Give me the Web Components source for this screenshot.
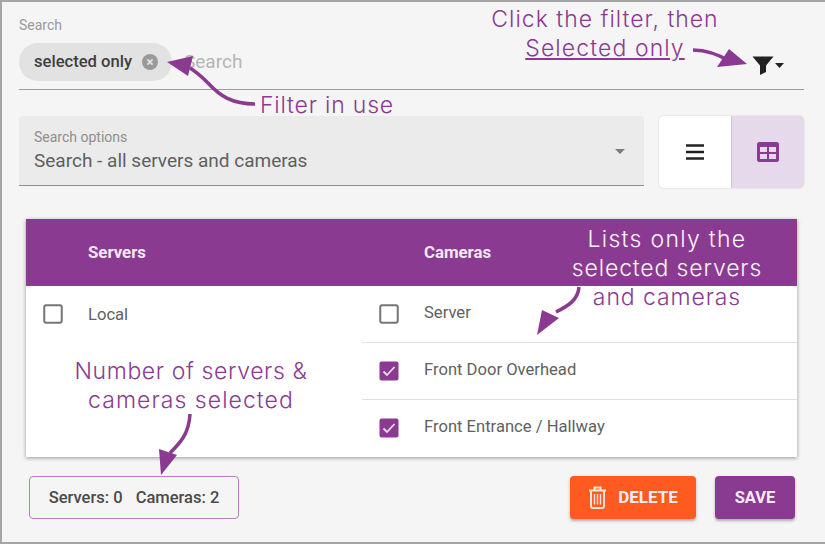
<!DOCTYPE html>
<html><head><meta charset="utf-8">
<style>
html,body{margin:0;padding:0;width:825px;height:544px;overflow:hidden;background:#f5f5f5}
body{font-family:Roboto,"Liberation Sans",sans-serif}
</style></head>
<body>
<app-frame>
  <search-bar slot="search"></search-bar>
  <options-row slot="options"></options-row>
  <data-table slot="table"></data-table>
  <footer-bar slot="footer"></footer-bar>
  <call-out slot="notes" style="left:470px;top:3px;width:266px"><span style="letter-spacing:1px">Click the filter, then</span><br><u style="letter-spacing:1.100px">Selected only</u></call-out>
  <call-out slot="notes" style="left:250px;top:89px;width:150px"><span style="letter-spacing:.8px">Filter in use</span></call-out>
  <call-out slot="notes" style="left:532px;top:223px;width:266px" data-tone="mix"><b style="font-weight:300;letter-spacing:1.300px">Lists only the</b><br><b style="font-weight:300;letter-spacing:.85px">selected servers</b><br><span style="letter-spacing:.9px">and cameras</span></call-out>
  <call-out slot="notes" style="left:49px;top:355px;width:280px"><span style="letter-spacing:.6px">Number of servers &amp;</span><br><span style="letter-spacing:1.050px">cameras selected</span></call-out>
  <note-arrows slot="notes"></note-arrows>
</app-frame>
<script>
const tpl = (el, html) => { el.attachShadow({mode:'open'}).innerHTML = html; };
class AppFrame extends HTMLElement{constructor(){super();tpl(this,`<style>
:host{display:block;position:relative;box-sizing:border-box;width:825px;height:544px;background:#f5f5f5;border:solid #a6a6a6;border-width:2px 0 2px 2px;padding:0 21px 0 17px;overflow:hidden}
.t{padding:0 7px;margin-top:31px}
.f{margin-top:19px}
</style><slot name="search"></slot><slot name="options"></slot><div class="t"><slot name="table"></slot></div><div class="f"><slot name="footer"></slot></div><slot name="notes"></slot>`);}}
class SearchBar extends HTMLElement{constructor(){super();tpl(this,`<style>
:host{display:block;height:88px;box-sizing:border-box;border-bottom:1.5px solid #9b9b9b;padding-top:16px;position:relative}
.l{font-size:14px;line-height:14px;color:#9a9a9a}
.row{display:flex;align-items:center;margin-top:11px}
.chip{display:flex;align-items:center;height:38px;width:153px;box-sizing:border-box;border-radius:19px;background:#e2e2e2;padding-left:15px;font-weight:500;color:#3f3f3f;white-space:nowrap;font-size:16.6px;line-height:36px}
.chip svg{margin-left:10px;flex:none}
.ph{margin-left:12px;font-size:19px;line-height:36px;color:#b5b5b5}
.fil{position:absolute;right:20px;top:54px;display:flex;align-items:center}
</style><div class="l">Search</div><div class="row"><div class="chip">selected only<svg width="16" height="16" viewBox="0 0 16 16"><circle cx="8" cy="8" r="8" fill="#9a9a9a"/><path d="M5.4 5.4l5.2 5.2M10.6 5.4l-5.2 5.2" stroke="#e2e2e2" stroke-width="1.9"/></svg></div><div class="ph">Search</div></div>
<div class="fil"><svg width="22" height="19" viewBox="0 0 22 19"><path d="M.5.5h21l-7.500 9v6.500l-6 3V9.500z" fill="#222"/></svg><svg width="9" height="5" viewBox="0 0 9 5" style="margin:0 0 0 1px"><path d="M0 0h9L4.500 5z" fill="#222"/></svg></div>`);}}
class OptionsRow extends HTMLElement{constructor(){super();tpl(this,`<style>
:host{display:flex;margin-top:25.5px;height:72px;gap:15px}
.sel{flex:1;height:70px;box-sizing:border-box;background:#ebebeb;border-bottom:1.5px solid #8e8e8e;border-radius:4px 4px 0 0;padding:14px 15px 0;position:relative}
.l{font-size:14px;line-height:14px;color:#8f8f8f}
.v{line-height:20px;margin-top:7px;color:#5f5f5f;font-size:19px}
.c{position:absolute;right:19px;top:33px;width:0;height:0;border:5.5px solid transparent;border-top:5.5px solid #7c7c7c;border-bottom:0}
.tg{display:flex;width:145px;border-radius:5px;overflow:hidden;box-shadow:0 0 1.5px rgba(0,0,0,.25)}
.tg div{flex:1;display:flex;align-items:center;justify-content:center;background:#fff}
.tg div+div{background:#e6d9ec;border-left:1px solid #d0c4d6}
</style><div class="sel"><div class="l">Search options</div><div class="v">Search - all servers and cameras</div><div class="c"></div></div>
<div class="tg"><div><svg width="20" height="18" viewBox="0 0 20 18"><path d="M1 2.500h18M1 9h18M1 15.500h18" stroke="#222" stroke-width="2.400" fill="none"/></svg></div>
<div><svg width="22" height="20" viewBox="0 0 22 20"><rect x="0" y="0" width="22" height="20" rx="2.500" fill="#8b3a92"/><rect x="3" y="5" width="7" height="5" fill="#e6d9ec"/><rect x="12" y="5" width="7" height="5" fill="#e6d9ec"/><rect x="3" y="12" width="7" height="5" fill="#e6d9ec"/><rect x="12" y="12" width="7" height="5" fill="#e6d9ec"/></svg></div></div>`);}}
class CheckBox extends HTMLElement{constructor(){super();const on=this.hasAttribute('checked');tpl(this,`<style>:host{display:block;width:20px;height:20px;flex:none}</style>`+(on?`<svg width="20" height="20" viewBox="0 0 20 20"><rect x=".5" y=".5" width="19" height="19" rx="2" fill="#8b3a92"/><path d="M4.500 10.500l3.500 3.500 7.500-8" stroke="#e9dcec" stroke-width="1.800" fill="none"/></svg>`:`<svg width="20" height="20" viewBox="0 0 20 20"><rect x="1.250" y="1.250" width="17.500" height="17.500" rx="2" fill="none" stroke="#757575" stroke-width="2"/></svg>`));}}
class DataTable extends HTMLElement{constructor(){super();tpl(this,`<style>
:host{display:block;background:#fff;box-shadow:0 1px 4px rgba(0,0,0,.4);height:238px;color:#616161;font-size:16.6px}
.h{height:67px;background:#8b3a92;color:#f3e8f4;font-weight:700;font-size:16.8px;display:grid;grid-template-columns:336px 1fr;align-items:center;box-sizing:border-box;padding-bottom:0}
.h div{padding-left:62px}
.b{display:grid;grid-template-columns:336px 1fr}
.srv{display:flex;align-items:center;gap:25px;height:56px;padding:0 0 0 17px}
.srv span{position:relative;top:1px}
.rw{display:flex;align-items:center;gap:25px;height:56px;padding-left:17px;border-bottom:1px solid #e0e0e0}
.rw span{position:relative;top:-1px}
.rw:last-child{border:0}
</style><div class="h"><div>Servers</div><div>Cameras</div></div>
<div class="b"><div><div class="srv"><check-box></check-box><span>Local</span></div></div>
<div><div class="rw"><check-box></check-box><span>Server</span></div><div class="rw"><check-box checked></check-box><span>Front Door Overhead</span></div><div class="rw"><check-box checked></check-box><span>Front Entrance / Hallway</span></div></div></div>`);}}
class FooterBar extends HTMLElement{constructor(){super();tpl(this,`<style>
:host{display:flex;align-items:center;padding:0 9px 0 10px;height:43px}
.n{width:210px;height:43px;box-sizing:border-box;border:1.5px solid #b57fbb;border-radius:4px;display:flex;align-items:center;justify-content:center;gap:13px;font-size:16.5px;font-weight:500;color:#4a4a4a}
.sp{flex:1}
.b{height:43px;border-radius:4px;display:flex;align-items:center;justify-content:center;color:#f6ecf5;font-weight:700;font-size:16.5px;box-shadow:0 2px 3px rgba(0,0,0,.3)}
.d{width:126px;background:#ff5a20;gap:11px;margin-right:19px;font-size:17px}
.s{width:80px;background:#8b3a92}
</style><div class="n"><span>Servers: 0</span><span>Cameras: 2</span></div><div class="sp"></div>
<div class="b d"><svg width="19" height="23" viewBox="0 0 19 23" fill="none" stroke="#fbe6dc" stroke-width="2"><path d="M1 4.500h17M6.500 4.500V1.500h6v3M3 4.500v15.500a2 2 0 0 0 2 2h9a2 2 0 0 0 2-2V4.500"/><path d="M6.500 8v10.500M9.500 8v10.500M12.500 8v10.500" stroke-width="1.400"/></svg><span>DELETE</span></div><div class="b s">SAVE</div>`);}}
class CallOut extends HTMLElement{constructor(){super();const t=this.dataset.tone;tpl(this,`<style>
:host{display:block;position:absolute;text-align:center;font-family:Inter,Lato,sans-serif;font-weight:300;font-size:23px;line-height:29px;color:${t==='mix'?'#fbf5fb':'#8b3a92'};white-space:nowrap}
::slotted(span){color:#8b3a92}
</style><slot></slot>`);}}
class NoteArrows extends HTMLElement{constructor(){super();tpl(this,`<style>:host{display:block;position:absolute;left:-2px;top:-2px;width:825px;height:544px;pointer-events:none}svg{display:block}</style>
<svg width="825" height="544" viewBox="0 0 825 544" fill="none" stroke="#8b3a92" stroke-width="3.500" stroke-linecap="butt">
<path d="M255 104C232 104 220 96 208 83 203 78 198 73 190 68"/><path d="M167 62L193 56 188 76z" fill="#8b3a92" stroke="none"/>
<path d="M693 50C705 50 718 54 731 62"/><path d="M747 64L717 67 729 49z" fill="#8b3a92" stroke="none"/>
<path d="M579 287C578 300 568 306 556 312"/><path d="M537 335L542 310 559 318z" fill="#8b3a92" stroke="none"/>
<path d="M190 414C189 434 180 443 170 453"/><path d="M161 475L159 449 177 455z" fill="#8b3a92" stroke="none"/>
</svg>`);}}
customElements.define('app-frame',AppFrame);
customElements.define('search-bar',SearchBar);
customElements.define('options-row',OptionsRow);
customElements.define('check-box',CheckBox);
customElements.define('data-table',DataTable);
customElements.define('footer-bar',FooterBar);
customElements.define('call-out',CallOut);
customElements.define('note-arrows',NoteArrows);
</script>
</body></html>
